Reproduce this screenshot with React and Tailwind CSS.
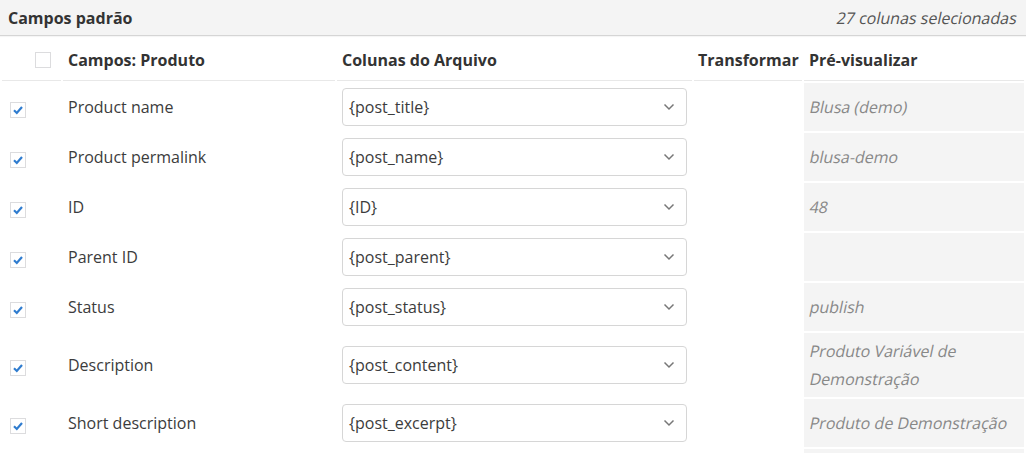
import React from "react";

const rows = [
  { field: "Product name", column: "{post_title}", preview: ["Blusa (demo)"] },
  { field: "Product permalink", column: "{post_name}", preview: ["blusa-demo"] },
  { field: "ID", column: "{ID}", preview: ["48"] },
  { field: "Parent ID", column: "{post_parent}", preview: [] },
  { field: "Status", column: "{post_status}", preview: ["publish"] },
  { field: "Description", column: "{post_content}", preview: ["Produto Variável de", "Demonstração"] },
  { field: "Short description", column: "{post_excerpt}", preview: ["Produto de Demonstração"] },
];

const Checkbox = ({ checked }) => (
  <span className="inline-flex h-4 w-4 items-center justify-center border border-[#dcdcde] bg-white">
    {checked && (
      <svg width="12" height="12" viewBox="0 0 12 12">
        <path d="M2 6.3 L4.8 9 L10 3" fill="none" stroke="#2f7ccf" strokeWidth="2.2" />
      </svg>
    )}
  </span>
);

const Chevron = () => (
  <svg width="12" height="8" viewBox="0 0 12 8">
    <path d="M1.5 1.5 L6 6 L10.5 1.5" fill="none" stroke="#777" strokeWidth="1.5" />
  </svg>
);

// slanted regular face, the italic face is too narrow
const Slant = ({ children }) => <span className="inline-block -skew-x-12">{children}</span>;

export default function App() {
  return (
    <div className="w-[1026px] bg-white text-[16px] text-[#3c3c3c]" style={{ fontFamily: '"Open Sans", "Liberation Sans", sans-serif' }}>
      <div className="flex h-[36px] items-center justify-between border-b border-[#d5d5d5] bg-[#f4f4f4] pl-2 pr-[9px] shadow-[0_1px_1px_rgba(0,0,0,0.04)]">
        <span className="font-bold text-[#333]">Campos padrão</span>
        <span className="text-[#555]"><Slant>27 colunas selecionadas</Slant></span>
      </div>
      <table className="mt-[2px] w-[1026px] table-fixed border-separate border-spacing-[2px]">
        <colgroup>
          <col className="w-[59px]" />
          <col className="w-[272px]" />
          <col className="w-[355px]" />
          <col className="w-[108px]" />
          <col className="w-[220px]" />
        </colgroup>
        <thead>
          <tr className="h-[41px] text-left font-bold text-[#333]">
            <th className="border-b border-[#e8e8e8] pl-[33px] align-middle">
              <span className="flex"><Checkbox /></span>
            </th>
            <th className="border-b border-[#e8e8e8] px-[5px]">Campos: Produto</th>
            <th className="border-b border-[#e8e8e8] px-[5px]">Colunas do Arquivo</th>
            <th className="whitespace-nowrap border-b border-[#e8e8e8] px-[4px]">Transformar</th>
            <th className="border-b border-[#e8e8e8] px-[5px]">Pré-visualizar</th>
          </tr>
        </thead>
        <tbody>
          {rows.map((r) => (
            <tr key={r.field}>
              <td className="pl-[8px] align-middle">
                <span className="mt-[6px] flex"><Checkbox checked /></span>
              </td>
              <td className="px-[5px] align-middle">{r.field}</td>
              <td className="p-[5px] align-middle">
                <div className="flex h-[38px] items-center justify-between rounded border border-[#d6d6d6] bg-white pl-[6px] pr-[11px]">
                  <span>{r.column}</span>
                  <Chevron />
                </div>
              </td>
              <td></td>
              <td className="bg-[#f4f4f4] px-[6px] py-[4px] align-middle leading-[28px] text-[#888]">
                {r.preview.map((line) => (
                  <div key={line}><Slant>{line}</Slant></div>
                ))}
              </td>
            </tr>
          ))}
          <tr className="h-[20px]">
            <td></td>
            <td></td>
            <td></td>
            <td></td>
            <td className="bg-[#f4f4f4]"></td>
          </tr>
        </tbody>
      </table>
    </div>
  );
}
